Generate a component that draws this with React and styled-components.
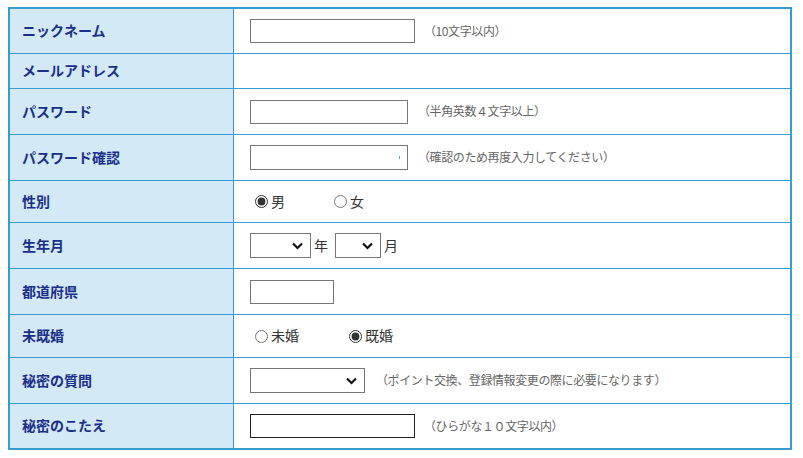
import React from "react";
import styled, { createGlobalStyle } from "styled-components";

const GlobalStyle = createGlobalStyle`
  body {
    margin: 0;
    background: #fff;
    font-family: "Noto Sans CJK JP", "Noto Sans", sans-serif;
  }
`;

const Chevron = () => (
  <svg width="11" height="8" viewBox="0 0 11 8">
    <path d="M1 1.5l4.5 4.5 4.5-4.5" fill="none" stroke="#111" strokeWidth="2.2" />
  </svg>
);

export default function App() {
  return (
    <>
      <GlobalStyle />
      <Form>
        <Row h={45}>
          <Label>ニックネーム</Label>
          <Value>
            <TextBox w={165} />
            <Hint gap={9}>（10文字以内）</Hint>
          </Value>
        </Row>
        <Row h={35}>
          <Label>メールアドレス</Label>
          <Value />
        </Row>
        <Row h={46}>
          <Label>パスワード</Label>
          <Value>
            <TextBox w={158} type="password" />
            <Hint gap={10}>（半角英数４文字以上）</Hint>
          </Value>
        </Row>
        <Row h={46}>
          <Label>パスワード確認</Label>
          <Value>
            <Confirm>
              <TextBox w={158} h={25} type="password" />
              <Dot />
            </Confirm>
            <Hint gap={10}>（確認のため再度入力してください）</Hint>
          </Value>
        </Row>
        <Row h={42}>
          <Label>性別</Label>
          <Value>
            <Choice gap={44}>
              <input type="radio" name="sex" defaultChecked />男
            </Choice>
            <Choice>
              <input type="radio" name="sex" />女
            </Choice>
          </Value>
        </Row>
        <Row h={46}>
          <Label>生年月</Label>
          <Value>
            <Select w={61}>
              <Chevron />
            </Select>
            <Unit>年</Unit>
            <Select w={46}>
              <Chevron />
            </Select>
            <Unit>月</Unit>
          </Value>
        </Row>
        <Row h={46}>
          <Label>都道府県</Label>
          <Value>
            <TextBox w={84} as="div" />
          </Value>
        </Row>
        <Row h={43}>
          <Label>未既婚</Label>
          <Value>
            <Choice gap={45}>
              <input type="radio" name="married" />未婚
            </Choice>
            <Choice>
              <input type="radio" name="married" defaultChecked />既婚
            </Choice>
          </Value>
        </Row>
        <Row h={46}>
          <Label>秘密の質問</Label>
          <Value>
            <Select w={115}>
              <Chevron />
            </Select>
            <Hint gap={11}>（ポイント交換、登録情報変更の際に必要になります）</Hint>
          </Value>
        </Row>
        <Row h={44} last>
          <Label>秘密のこたえ</Label>
          <Value>
            <TextBox w={165} dark />
            <Hint gap={9}>（ひらがな１０文字以内）</Hint>
          </Value>
        </Row>
      </Form>
    </>
  );
}

const Form = styled.div`
  margin: 7px 0 0 8px;
  width: 780px;
  border: 2px solid #3a9bd0;
`;

const Row = styled.div`
  display: grid;
  grid-template-columns: 224px 1fr;
  height: ${(p) => p.h}px;
  box-sizing: border-box;
  border-bottom: ${(p) => (p.last ? "none" : "1px solid #3a9bd0")};
`;

const Label = styled.div`
  display: flex;
  align-items: center;
  padding: 0 0 2px 12px;
  background: #d3e9f5;
  border-right: 1px solid #3a9bd0;
  color: #1a2f8a;
  font-size: 14px;
  font-weight: bold;
`;

const Value = styled.div`
  display: flex;
  align-items: center;
  padding-left: 16px;
  color: #333;
  font-size: 14px;
`;

const TextBox = styled.input`
  box-sizing: border-box;
  width: ${(p) => p.w}px;
  height: ${(p) => p.h || 24}px;
  margin: 0;
  padding: 0 4px;
  border: 1px solid ${(p) => (p.dark ? "#222" : "#767676")};
  border-radius: 0;
  background: #fff;
  outline: none;
`;

const Confirm = styled.div`
  position: relative;
  display: flex;
`;

const Dot = styled.span`
  position: absolute;
  right: 8px;
  top: 11px;
  width: 1px;
  height: 3px;
  background: #5aa8d8;
`;

const Hint = styled.span`
  margin-left: ${(p) => p.gap}px;
  padding-bottom: 2px;
  color: #666;
  font-size: 12px;
  letter-spacing: -0.4px;
`;

const Choice = styled.label`
  display: flex;
  align-items: center;
  margin-right: ${(p) => p.gap || 0}px;
  padding-bottom: 2px;
  color: #333;
  font-size: 14px;

  input {
    margin: 2px 3px 0 5px;
    width: 13px;
    height: 13px;
    accent-color: #333;
  }
`;

const Select = styled.div`
  box-sizing: border-box;
  display: flex;
  align-items: center;
  justify-content: flex-end;
  width: ${(p) => p.w}px;
  height: 25px;
  padding-right: 7px;
  border: 1px solid #767676;
  background: #fff;
`;

const Unit = styled.span`
  margin: 0 7px 2px 3px;
  font-size: 14px;
  color: #333;
`;
